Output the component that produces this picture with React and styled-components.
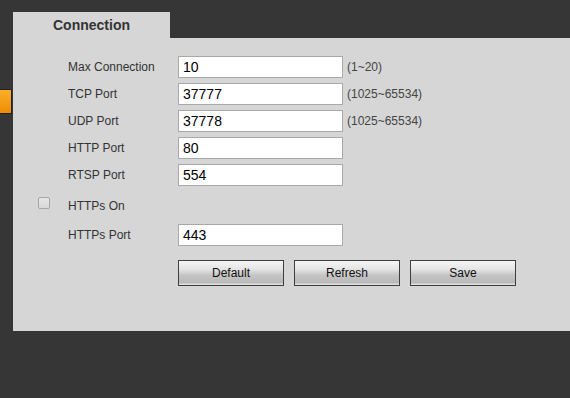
import styled, { createGlobalStyle } from "styled-components";

const GlobalStyle = createGlobalStyle`
  html, body {
    margin: 0;
    padding: 0;
    background: #363636;
    font-family: "Liberation Sans", Arial, sans-serif;
  }
`;

// Port rows
const ports = [
  { label: "Max Connection", value: "10", hint: "(1~20)" },
  { label: "TCP Port", value: "37777", hint: "(1025~65534)" },
  { label: "UDP Port", value: "37778", hint: "(1025~65534)" },
  { label: "HTTP Port", value: "80" },
  { label: "RTSP Port", value: "554" },
];

const Page = styled.div`
  display: flex;
  width: 570px;
  height: 398px;
  overflow: hidden;
`;

const Side = styled.div`
  width: 13px;
  flex-shrink: 0;
  padding-top: 89px;
`;

const SideButton = styled.div`
  width: 12px;
  height: 25px;
  box-sizing: border-box;
  border: 1px solid #222;
  border-left: none;
  background: linear-gradient(to bottom, #fbb02a, #ee8c02);
`;

const Main = styled.div`
  flex: 1;
  padding-top: 12px;
`;

const Tab = styled.div`
  width: 157px;
  height: 26px;
  background: #d6d6d6;
  display: flex;
  align-items: center;
  justify-content: center;
  font-size: 14px;
  font-weight: bold;
  color: #333;
`;

const Panel = styled.div`
  background: #d6d6d6;
  height: 293px;
  box-sizing: border-box;
  padding-top: 18px;
  display: flex;
  flex-direction: column;
`;

const Row = styled.div`
  display: flex;
  align-items: center;
  height: 22px;
  margin-top: ${(p) => p.$top || 5}px;
  &:first-child {
    margin-top: 0;
  }
`;

const CheckCell = styled.div`
  width: 55px;
  display: flex;
  justify-content: flex-start;
  padding-left: 25px;
  box-sizing: border-box;
`;

const Check = styled.span`
  display: block;
  width: 12px;
  height: 12px;
  box-sizing: border-box;
  border: 1px solid #a8a8a8;
  border-radius: 2px;
  background: linear-gradient(to bottom, #e6e6e6, #d8d8d8);
  margin-top: -6px;
`;

const Label = styled.div`
  width: 110px;
  font-size: 12px;
  color: #333;
`;

const Input = styled.div`
  width: 165px;
  height: 22px;
  box-sizing: border-box;
  border: 1px solid #a9a9a9;
  background: #fff;
  font-size: 14px;
  color: #000;
  padding-left: 4px;
  display: flex;
  align-items: center;
`;

const Hint = styled.span`
  margin-left: 4px;
  font-size: 12px;
  color: #444;
`;

const Buttons = styled.div`
  display: flex;
  gap: 10px;
  margin-top: 14px;
  padding-left: 165px;
`;

const Button = styled.button`
  width: 106px;
  height: 26px;
  box-sizing: border-box;
  border: 1px solid #3e3e3e;
  background: linear-gradient(
    to bottom,
    #f6f6f6 0%,
    #e4e4e4 35%,
    #c4c4c4 60%,
    #b9b9b9 90%,
    #e8e8e8 100%
  );
  font-family: "Liberation Sans", Arial, sans-serif;
  font-size: 12px;
  color: #111;
  padding: 0;
`;

export default function App() {
  return (
    <Page>
      <GlobalStyle />
      <Side>
        <SideButton />
      </Side>
      <Main>
        <Tab>Connection</Tab>
        <Panel>
          {ports.map((p) => (
            <Row key={p.label}>
              <CheckCell />
              <Label>{p.label}</Label>
              <Input>{p.value}</Input>
              {p.hint && <Hint>{p.hint}</Hint>}
            </Row>
          ))}
          <Row $top={9}>
            <CheckCell>
              <Check />
            </CheckCell>
            <Label>HTTPs On</Label>
          </Row>
          <Row $top={7}>
            <CheckCell />
            <Label>HTTPs Port</Label>
            <Input>443</Input>
          </Row>
          <Buttons>
            <Button>Default</Button>
            <Button>Refresh</Button>
            <Button>Save</Button>
          </Buttons>
        </Panel>
      </Main>
    </Page>
  );
}
